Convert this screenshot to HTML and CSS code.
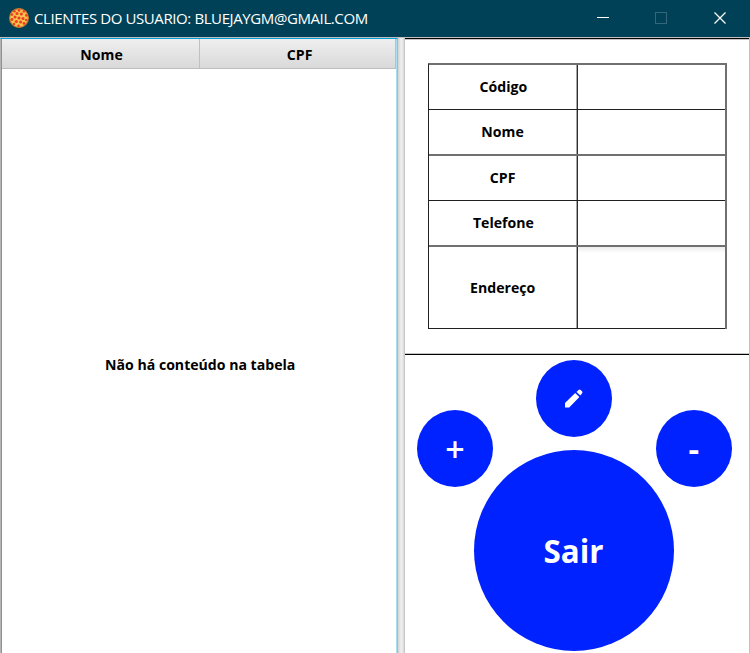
FILE: index.html
```
<!DOCTYPE html>
<html lang="pt-BR">
<head>
<meta charset="utf-8">
<title>Clientes</title>
<link rel="stylesheet" href="styles.css">
</head>
<body>
<div class="window">
  <header class="titlebar">
    <svg class="logo" width="20" height="20" viewBox="0 0 20 20">
      <circle cx="10" cy="10" r="9.4" fill="#f8c34c" stroke="#c8742c" stroke-width="1.2"/>
      <g fill="#ef3d24">
        <circle cx="10" cy="10" r="1.6"/><circle cx="6" cy="9" r="1.5"/><circle cx="14" cy="10.5" r="1.5"/>
        <circle cx="8" cy="5.5" r="1.5"/><circle cx="12.3" cy="6" r="1.5"/><circle cx="7.3" cy="13.5" r="1.5"/>
        <circle cx="11.6" cy="14" r="1.5"/><circle cx="3" cy="6.6" r="1.3"/><circle cx="3" cy="11.5" r="1.4"/>
        <circle cx="10" cy="2.4" r="1.3"/><circle cx="14.8" cy="3.4" r="1.2"/><circle cx="17.3" cy="7.4" r="1.3"/>
        <circle cx="17.2" cy="12" r="1.3"/><circle cx="15" cy="15.4" r="1.4"/><circle cx="9.6" cy="17.7" r="1.3"/><circle cx="5" cy="16" r="1.2"/><circle cx="5.5" cy="3.2" r="1.2"/>
      </g>
    </svg>
    <span class="title">CLIENTES DO USUARIO: BLUEJAYGM@GMAIL.COM</span>
    <svg class="controls" width="132" height="18" viewBox="0 0 132 18" fill="none">
      <path d="M0 8.5H12" stroke="#fff"/>
      <rect x="58.5" y="3.5" width="11" height="11" stroke="#34677a"/>
      <path d="M117.5 3.5L128.5 14.5M128.5 3.5L117.5 14.5" stroke="#fff" stroke-width="1.3"/>
    </svg>
  </header>
  <main class="content">
    <section class="table">
      <div class="head">
        <div class="col"><span>Nome</span></div>
        <div class="col col-last"><span>CPF</span></div>
      </div>
      <div class="empty"><span>Não há conteúdo na tabela</span></div>
    </section>
    <div class="divider"></div>
    <section class="side">
      <div class="details">
        <div class="form">
          <div class="row"><div class="label"><span>Código</span></div><div class="value"></div></div>
          <div class="row thin"><div class="label"><span>Nome</span></div><div class="value"></div></div>
          <div class="row"><div class="label"><span>CPF</span></div><div class="value"></div></div>
          <div class="row thin"><div class="label"><span>Telefone</span></div><div class="value"></div></div>
          <div class="row tall"><div class="label"><span>Endereço</span></div><div class="value"></div></div>
        </div>
      </div>
      <div class="actions">
        <button class="round edit" aria-label="Editar">
          <svg width="18" height="19" viewBox="0 0 18 19" fill="#fff"><path d="M0 14L10.2 4L14.4 8L4.2 18.4H0Z"/><path d="M11.5 3L13.5 1Q14.7 0 15.7 1L17 2.3Q18 3.4 17 4.4L15.3 6.6Z"/></svg>
        </button>
        <button class="round add"><span>+</span></button>
        <button class="round remove"><span>-</span></button>
        <button class="round exit"><span>Sair</span></button>
      </div>
    </section>
  </main>
</div>
</body>
</html>
```
FILE: styles.css
```
* { box-sizing: border-box; }
body { margin: 0; background: #fff; font-family: "Open Sans", "Noto Sans", sans-serif; font-size: 15px; color: #000; }
.window { width: 750px; height: 653px; overflow: hidden; display: flex; flex-direction: column; }
.titlebar { height: 37px; flex: none; background: #004157; color: #fff; display: flex; align-items: center; padding: 0 21px 1px 9px; }
.logo { margin-right: 5px; }
.title { font-size: 15px; letter-spacing: -0.4px; white-space: nowrap; }
.controls { margin-left: auto; }
.content { flex: 1; display: flex; min-height: 0; border-top: 1px solid #c0c0c0; font-weight: 700; }
.table { width: 398px; display: flex; flex-direction: column; border-top: 1px solid #039ed3; border-left: 1px solid #b5b5b5; border-right: 1px solid #b5b5b5; box-shadow: inset 1px 0 #4ba9c2, inset -1px 0 #a9dff0; padding: 0 1px; }
.head { display: flex; height: 30px; border-bottom: 1px solid #bdbdbd; background: linear-gradient(#efefef, #d9d9d9); }
.col { width: 198px; display: flex; align-items: center; justify-content: center; border-right: 1px solid #c0c0c0; padding-left: 2px; }
.col-last { flex: 1; padding-left: 4px; }
.col span, .label span, .empty span { display: inline-block; transform: scaleX(0.94); white-space: nowrap; }
.empty { flex: 1; display: flex; align-items: center; justify-content: center; padding: 5px 0 0 2px; }
.divider { width: 7px; background: linear-gradient(90deg, #d2d2d2, #f0f0f0 45%, #e2e2e2 75%, #bcbcbc); }
.side { width: 345px; display: flex; flex-direction: column; border-right: 1px solid #c0c0c0; }
.details { height: 317px; border-top: 1px solid #000; border-bottom: 1px solid #000; box-shadow: inset 0 1px #c4c4c4, inset 0 -1px #c4c4c4; padding: 24px 22px 0 23px; }
.form { border-top: 2px solid #707070; border-left: 1px solid #202020; border-right: 2px solid #707070; }
.row { display: flex; height: 45px; border-bottom: 1px solid #202020; }
.thin { height: 46px; border-bottom: 2px solid #707070; }
.tall { height: 82px; }
.label { width: 148px; display: flex; align-items: center; justify-content: center; border-right: 1px solid #a6a6a6; padding: 0 0 2px 1px; }
.value { flex: 1; border-left: 1px solid #303030; }
.tall .value { background: linear-gradient(#ececec, #fff 6px); }
.actions { display: grid; grid-template-columns: 1fr; padding: 5px 17px 0 12px; }
.round { grid-area: 1 / 1; width: 76px; height: 77px; padding: 0; border: 0; border-radius: 50%; background: #0022ff; color: #fff; font: inherit; display: flex; align-items: center; justify-content: center; }
.edit { justify-self: center; margin-right: 2px; }
.add, .remove { margin-top: 50px; font-size: 30px; }
.add { justify-self: start; font-size: 34px; font-weight: 600; }
.remove { justify-self: end; }
.remove span { transform: scaleX(1.1); }
.exit { justify-self: center; width: 200px; height: 201px; margin: 90px 1px 0 0; font-size: 33px; }
.exit span { transform: scaleX(0.95); }
```
